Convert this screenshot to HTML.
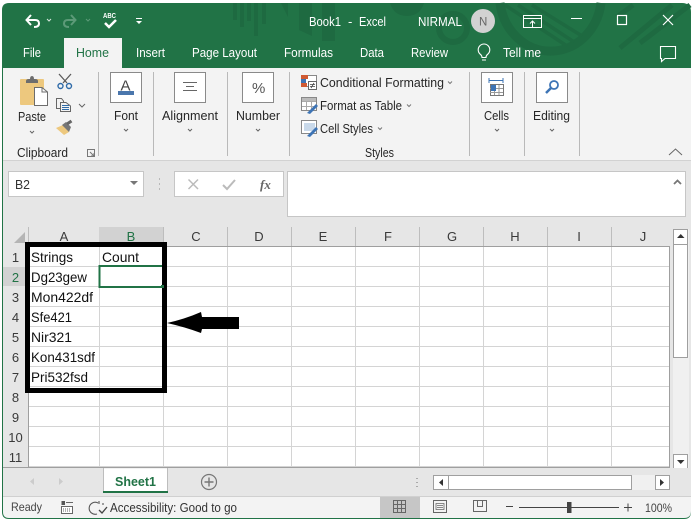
<!DOCTYPE html>
<html><head><meta charset="utf-8"><style>
html,body{margin:0;padding:0;background:#fff;width:694px;height:522px;overflow:hidden}
svg{display:block;position:absolute;left:0;top:0}
text{font-family:"Liberation Sans",sans-serif;font-size:13px;fill:#262626}
.w text{fill:#fff}
.c text{font-size:14px;fill:#111}
.h text{font-size:13px;fill:#3a3a3a;text-anchor:middle}
</style></head><body>
<svg width="694" height="522" viewBox="0 0 694 522">
<rect width="694" height="522" fill="#fff"/>
<!-- window -->
<path d="M2 10Q2 3 9 3H682Q691 3 691 12V512Q691 519 684 519H9Q2 519 2 512Z" fill="#217346"/>
<!-- title pattern -->
<g fill="#1e6a41">
<rect x="233" y="3" width="4" height="17"/><rect x="240" y="3" width="4" height="24"/><rect x="247" y="3" width="4" height="18"/><rect x="254" y="3" width="4" height="33"/><rect x="262" y="3" width="4" height="21"/>
<path d="M281 3H288V17Z"/><path d="M299 3H312V36L299 30Z"/><rect x="322" y="3" width="13" height="38"/>
<path d="M390 3H424Q420 16 407 16Q394 16 390 3Z"/>
</g>
<g fill="none" stroke="#1e6a41">
<circle cx="453" cy="28" r="14" stroke-width="6"/>
<path d="M500 3A51 56 0 0 0 601 3" stroke-width="9"/>
<path d="M505 5L567 46M518 5L574 42M532 5L582 36" stroke-width="3.5"/>
<path d="M617 17L633 5M620 48L672 5M640 43L690 5" stroke-width="5"/>
</g>
<rect x="3" y="68" width="688" height="92" fill="#f3f3f3"/>
<rect x="3" y="160" width="688" height="1" fill="#d2d2d2"/>
<rect x="3" y="161" width="688" height="336" fill="#e6e6e6"/>
<path d="M3 497H691V511Q691 518 684 518H9Q3 518 3 512Z" fill="#f3f3f3"/>
<rect x="3" y="496" width="688" height="1" fill="#d0d0d0"/>
<!-- QAT -->
<g fill="none" stroke="#fff" stroke-width="2">
<path d="M27 20H35Q39 20 39 23.500Q39 27 34 27"/><path d="M31 15L26.500 20L31 25" />
</g>
<path d="M47 19L49 21L51 19" fill="none" stroke="#d8e6dd"/>
<g fill="none" stroke="#5c9a78" stroke-width="2"><path d="M75 20H68Q64 20 64 23.500Q64 27 69 27"/><path d="M71 15L75.500 20L71 25"/></g>
<path d="M86 19L88 21L90 19" fill="none" stroke="#5c9a78"/>
<text x="103" y="18" textLength="13" lengthAdjust="spacingAndGlyphs" style="font-size:7px;font-weight:bold;fill:#fff">ABC</text>
<path d="M105 23L109 27L116 20" fill="none" stroke="#fff" stroke-width="2.500"/>
<path d="M136 18.500H142" stroke="#fff"/><path d="M136 21H142L139 24Z" fill="#fff"/>
<g class="w">
<text x="309" y="26" textLength="32" lengthAdjust="spacingAndGlyphs">Book1</text>
<text x="348" y="26">-</text>
<text x="359" y="26" textLength="27" lengthAdjust="spacingAndGlyphs">Excel</text>
<text x="418" y="26" textLength="44" lengthAdjust="spacingAndGlyphs">NIRMAL</text>
</g>
<circle cx="483" cy="21" r="12" fill="#d2d2d2"/>
<text x="479" y="25.500" style="font-size:11.5px;fill:#666">N</text>
<!-- window controls -->
<g fill="none" stroke="#fff">
<path d="M523.500 15.500H541.500V27.500H523.500ZM523.500 18.500H541.500"/>
<path d="M532.500 27V21.500M530 23.500L532.500 21L535 23.500"/>
<path d="M571 18.500H582"/>
<rect x="617.500" y="15.500" width="9" height="9" stroke-width="1.200"/>
<path d="M663 15L673 25M673 15L663 25" stroke-width="1.200"/>
<path d="M660.500 46.500H675.500V58.500H665L661.500 61.500V58.500H660.500Z" stroke-width="1.100"/>
<path d="M482 57.500Q482 55.500 480 54A5.800 5.800 0 1 1 488 54Q486 55.500 486 57.500ZM482 60H486" stroke-width="1.100"/>
</g>
<!-- tabs -->
<rect x="64" y="38" width="58" height="30" fill="#f3f3f3"/>
<g class="w">
<text x="23" y="57" textLength="18" lengthAdjust="spacingAndGlyphs">File</text>
<text x="136" y="57" textLength="29" lengthAdjust="spacingAndGlyphs">Insert</text>
<text x="192" y="57" textLength="65" lengthAdjust="spacingAndGlyphs">Page Layout</text>
<text x="284" y="57" textLength="49" lengthAdjust="spacingAndGlyphs">Formulas</text>
<text x="360" y="57" textLength="24" lengthAdjust="spacingAndGlyphs">Data</text>
<text x="411" y="57" textLength="37" lengthAdjust="spacingAndGlyphs">Review</text>
<text x="503" y="57" textLength="38" lengthAdjust="spacingAndGlyphs">Tell me</text>
</g>
<text x="76" y="57" textLength="33" lengthAdjust="spacingAndGlyphs" style="fill:#217346">Home</text>
<!-- separators -->
<g fill="#b9b9b9"><rect x="98" y="72" width="1" height="84"/><rect x="153" y="72" width="1" height="84"/><rect x="227" y="72" width="1" height="84"/><rect x="289" y="72" width="1" height="84"/><rect x="469" y="72" width="1" height="84"/><rect x="524" y="72" width="1" height="84"/><rect x="579" y="72" width="1" height="84"/></g>
<!-- clipboard -->
<rect x="20" y="79" width="24" height="26" rx="1" fill="#edc87e"/>
<path d="M26 81Q26 79 29 79H30Q30 76 32 76Q34 76 34 79H35Q38 79 38 81V83H26Z" fill="#6d6d6d"/>
<path d="M34.500 87.500H42L47.500 92V105.500H34.500Z" fill="#fff" stroke="#6d6d6d"/>
<path d="M42 87.500V92H47.500" fill="none" stroke="#6d6d6d"/>
<g fill="none" stroke="#5a5a5a" stroke-width="1.300"><path d="M59 74L67 83M71 74L63 83"/></g>
<g fill="none" stroke="#2f6ba8" stroke-width="1.400"><circle cx="60.500" cy="86" r="2.500"/><circle cx="69" cy="86" r="2.500"/></g>
<g fill="#f3f3f3" stroke="#666"><path d="M56.500 98.500H61.500L63.500 101V108.500H56.500Z"/><path d="M60.500 102.500H66L70.500 106V111.500H60.500Z"/></g>
<path d="M62 105.500H69M62 107.500H69M62 109.500H69" stroke="#2f6ba8"/>
<path d="M79 104L82 107L85 104" fill="none" stroke="#666"/>
<path d="M56 128L63 125L69 132L64 135Z" fill="#edc87e"/>
<path d="M62 125L66 122L71 127L69 132Z" fill="#777"/><path d="M67 124L71.500 121" stroke="#666" stroke-width="3"/>
<text x="18" y="121" textLength="28" lengthAdjust="spacingAndGlyphs">Paste</text>
<path d="M30 131L32 133L34 131" fill="none" stroke="#666"/>
<text x="17" y="157" textLength="51" lengthAdjust="spacingAndGlyphs">Clipboard</text>
<path d="M87.500 149.500H94.500V156.500H87.500ZM90 152L94 156M94 153V156H91" fill="none" stroke="#777"/>
<!-- big buttons -->
<g fill="#fff" stroke="#8a8a8a"><rect x="110.500" y="72.500" width="31" height="30"/><rect x="174.500" y="72.500" width="31" height="30"/><rect x="242.500" y="72.500" width="31" height="30"/><rect x="481.500" y="72.500" width="31" height="30"/><rect x="536.500" y="72.500" width="31" height="30"/></g>
<text x="120.500" y="90.500" style="font-size:15px;fill:#444">A</text>
<rect x="118" y="91" width="16" height="4" fill="#4a76ac"/>
<path d="M183 82.500H197M186 86.500H194M183 90.500H197" stroke="#666"/>
<text x="252" y="93" style="font-size:15px;fill:#555">%</text>
<path d="M489 80.500H503M489 78V83M503 78V83" stroke="#3d74b5"/>
<rect x="490.500" y="84.500" width="13" height="11" fill="#fff" stroke="#777"/>
<path d="M490 88.500H503M490 92.500H503M494.500 85V95M499 85V95" stroke="#999"/>
<rect x="491" y="85" width="5" height="6" fill="#3d74b5"/>
<circle cx="554" cy="85" r="4" fill="none" stroke="#3d74b5" stroke-width="1.800"/><path d="M551 88L546 93" stroke="#3d74b5" stroke-width="2.500"/>
<text x="114" y="120" textLength="24" lengthAdjust="spacingAndGlyphs">Font</text>
<text x="162" y="120" textLength="56" lengthAdjust="spacingAndGlyphs">Alignment</text>
<text x="236" y="120" textLength="44" lengthAdjust="spacingAndGlyphs">Number</text>
<text x="484" y="120" textLength="25" lengthAdjust="spacingAndGlyphs">Cells</text>
<text x="533" y="120" textLength="37" lengthAdjust="spacingAndGlyphs">Editing</text>
<g fill="none" stroke="#666"><path d="M124 129L126 131L128 129M188 129L190 131L192 129M256 129L258 131L260 129M495 129L497 131L499 129M550 129L552 131L554 129"/></g>
<!-- styles -->
<rect x="301.500" y="75.500" width="15" height="11" fill="#fff" stroke="#888"/>
<rect x="301" y="75" width="7" height="4" fill="#d05a33"/><rect x="301" y="79" width="5" height="4" fill="#3d74b5"/><rect x="301" y="83" width="6" height="4" fill="#d05a33"/>
<rect x="308.500" y="81.500" width="8" height="8" fill="#fff" stroke="#666"/><path d="M310 84.500H315M310 86.500H315M314 83L311 88" stroke="#444" stroke-width=".8"/>
<g><rect x="301.500" y="97.500" width="15" height="13" fill="#fff" stroke="#888"/><path d="M302 101.500H316M302 106.500H316M306.500 98V110M311.500 98V110" stroke="#aaa"/><rect x="302" y="98" width="14" height="3" fill="#bbb"/><path d="M307 113L316 104L318 106L310 114Z" fill="#3d74b5"/></g>
<g><rect x="301.500" y="120.500" width="15" height="13" fill="#fff" stroke="#888"/><rect x="304" y="123" width="11" height="8" fill="#c9d9ea"/><path d="M307 136L316 127L318 129L310 137Z" fill="#3d74b5"/></g>
<text x="320" y="87" textLength="124" lengthAdjust="spacingAndGlyphs">Conditional Formatting</text>
<text x="320" y="110" textLength="82" lengthAdjust="spacingAndGlyphs">Format as Table</text>
<text x="320" y="133" textLength="53" lengthAdjust="spacingAndGlyphs">Cell Styles</text>
<text x="365" y="157" textLength="29" lengthAdjust="spacingAndGlyphs">Styles</text>
<g fill="none" stroke="#777"><path d="M448 81.500L450 83.500L452 81.500M407 104.500L409 106.500L411 104.500M378 127.500L380 129.500L382 127.500"/></g>
<path d="M669 155L675.500 149L682 155" fill="none" stroke="#666"/>
<!-- formula bar -->
<rect x="8.500" y="171.500" width="135" height="25" fill="#fff" stroke="#c6c6c6"/>
<text x="15" y="189" textLength="15" lengthAdjust="spacingAndGlyphs" style="font-size:13px;fill:#333">B2</text>
<path d="M130 181H138L134 185Z" fill="#777"/>
<path d="M159 179H160M159 184H160M159 189H160" stroke="#aaa" stroke-width="1.500"/>
<rect x="174.500" y="171.500" width="109" height="25" fill="#fff" stroke="#c6c6c6"/>
<path d="M188.500 179.500L198 189M198 179.500L188.500 189" stroke="#bbb" stroke-width="1.500" fill="none"/>
<path d="M223 185L227 189L235 180" stroke="#bbb" stroke-width="2" fill="none"/>
<text x="260" y="189" style="font-family:'Liberation Serif',serif;font-style:italic;font-weight:bold;font-size:13px;fill:#666">fx</text>
<rect x="287.500" y="171.500" width="398" height="45" fill="#fff" stroke="#c6c6c6"/>
<path d="M674 184L677.500 180.500L681 184" fill="none" stroke="#777" stroke-width="1.800"/>
<!-- grid -->
<rect x="29" y="247" width="641" height="221" fill="#fff"/>
<g fill="#d4d4d4">
<rect x="99" y="247" width="1" height="221"/><rect x="163" y="247" width="1" height="221"/><rect x="227" y="247" width="1" height="221"/><rect x="291" y="247" width="1" height="221"/><rect x="355" y="247" width="1" height="221"/><rect x="419" y="247" width="1" height="221"/><rect x="483" y="247" width="1" height="221"/><rect x="547" y="247" width="1" height="221"/><rect x="611" y="247" width="1" height="221"/>
<rect x="29" y="266" width="641" height="1"/><rect x="29" y="286" width="641" height="1"/><rect x="29" y="306" width="641" height="1"/><rect x="29" y="326" width="641" height="1"/><rect x="29" y="346" width="641" height="1"/><rect x="29" y="366" width="641" height="1"/><rect x="29" y="386" width="641" height="1"/><rect x="29" y="406" width="641" height="1"/><rect x="29" y="426" width="641" height="1"/><rect x="29" y="446" width="641" height="1"/><rect x="29" y="466" width="641" height="1"/>
</g>
<!-- headers -->
<rect x="99" y="227" width="64" height="19" fill="#d2d2d2"/>
<rect x="3" y="267" width="25" height="19" fill="#d2d2d2"/>
<path d="M25 232V243H14Z" fill="#b5b5b5"/>
<g fill="#bdbdbd"><rect x="28" y="227" width="1" height="19"/><rect x="163" y="227" width="1" height="19"/><rect x="227" y="227" width="1" height="19"/><rect x="291" y="227" width="1" height="19"/><rect x="355" y="227" width="1" height="19"/><rect x="419" y="227" width="1" height="19"/><rect x="483" y="227" width="1" height="19"/><rect x="547" y="227" width="1" height="19"/><rect x="611" y="227" width="1" height="19"/></g>
<rect x="28" y="246" width="642" height="1" fill="#9f9f9f"/>
<rect x="28" y="246" width="1" height="222" fill="#9f9f9f"/>
<rect x="669" y="246" width="1" height="223" fill="#9f9f9f"/>
<rect x="3" y="467" width="667" height="1" fill="#9f9f9f"/>
<g class="h">
<text x="64" y="241">A</text><text x="131" y="241" style="fill:#217346">B</text><text x="196" y="241">C</text><text x="259" y="241">D</text><text x="323" y="241">E</text><text x="388" y="241">F</text><text x="452" y="241">G</text><text x="515" y="241">H</text><text x="579" y="241">I</text><text x="643" y="241">J</text>
<text x="15.500" y="262">1</text><text x="15.500" y="282" style="fill:#217346">2</text><text x="15.500" y="302">3</text><text x="15.500" y="322">4</text><text x="15.500" y="342">5</text><text x="15.500" y="362">6</text><text x="15.500" y="382">7</text><text x="15.500" y="402">8</text><text x="15.500" y="422">9</text><text x="15.500" y="442">10</text><text x="15.500" y="462">11</text>
</g>
<g class="c">
<text x="31" y="262" textLength="42" lengthAdjust="spacingAndGlyphs">Strings</text>
<text x="102" y="262" textLength="37" lengthAdjust="spacingAndGlyphs">Count</text>
<text x="31" y="282" textLength="56" lengthAdjust="spacingAndGlyphs">Dg23gew</text>
<text x="31" y="302" textLength="62" lengthAdjust="spacingAndGlyphs">Mon422df</text>
<text x="31" y="322" textLength="41" lengthAdjust="spacingAndGlyphs">Sfe421</text>
<text x="31" y="342" textLength="41" lengthAdjust="spacingAndGlyphs">Nir321</text>
<text x="31" y="362" textLength="64" lengthAdjust="spacingAndGlyphs">Kon431sdf</text>
<text x="31" y="382" textLength="57" lengthAdjust="spacingAndGlyphs">Pri532fsd</text>
</g>
<!-- selection -->
<path d="M162 266H99.500V287H162" fill="none" stroke="#217346" stroke-width="2"/>
<!-- annotation -->
<rect x="27.500" y="244.500" width="137" height="146" fill="none" stroke="#000" stroke-width="5"/>
<rect x="161" y="285" width="3" height="3" fill="#217346"/>
<path d="M167 323Q185 319 201 312L202 317H239V329H202L201 333Q185 327 167 323Z" fill="#000"/>
<!-- vertical scrollbar -->
<rect x="673" y="229" width="16" height="240" fill="#f0f0f0"/>
<rect x="673.500" y="244.500" width="14" height="113" fill="#fff" stroke="#9f9f9f"/>
<rect x="673.500" y="229.500" width="14" height="15" fill="#fff" stroke="#9f9f9f"/>
<rect x="673.500" y="454.500" width="14" height="14" fill="#fff" stroke="#9f9f9f"/>
<path d="M677 238H684.500L680.750 234Z" fill="#333"/><path d="M677 460H684.500L680.750 464Z" fill="#333"/>
<!-- sheet tabs -->
<rect x="3" y="468" width="688" height="28" fill="#e6e6e6"/>
<path d="M103.500 468.500H167.500V491H103.500Z" fill="#fff"/>
<path d="M103.500 468V492M167.500 468V492" stroke="#bdbdbd"/>
<rect x="103" y="491" width="65" height="2" fill="#217346"/>
<text x="115" y="486" textLength="41" lengthAdjust="spacingAndGlyphs" style="font-weight:bold;font-size:13px;fill:#217346">Sheet1</text>
<path d="M34 478L30 481.500L34 485ZM59 478L63 481.500L59 485Z" fill="#ccc"/>
<circle cx="209" cy="482" r="7.500" fill="none" stroke="#777" stroke-width="1.200"/><path d="M204.500 482H213.500M209 477.500V486.500" stroke="#777" stroke-width="1.400"/>
<path d="M417 478V479M417 482V483M417 486V487" stroke="#aaa" stroke-width="2"/>
<rect x="433" y="475" width="237" height="15" fill="#f0f0f0"/>
<rect x="433.500" y="475.500" width="15" height="14" fill="#fff" stroke="#9f9f9f"/>
<rect x="448.500" y="475.500" width="183" height="14" fill="#fff" stroke="#9f9f9f"/>
<rect x="655.500" y="475.500" width="14" height="14" fill="#fff" stroke="#9f9f9f"/>
<path d="M443 479V486L439 482.500ZM660 479V486L664 482.500Z" fill="#333"/>
<!-- status bar -->
<text x="11" y="511" textLength="31" lengthAdjust="spacingAndGlyphs" style="font-size:12px;fill:#444">Ready</text>
<rect x="61.500" y="501" width="3.500" height="4" fill="#555"/><rect x="61.500" y="506.500" width="11" height="7" fill="#fff" stroke="#666"/><path d="M66 502.500H73" stroke="#666"/><path d="M63 509H71M63 511H71" stroke="#666" stroke-dasharray="1 1"/>
<path d="M98 503A6 6 0 1 0 97 514M99 504V501M103 503V505" fill="none" stroke="#555" stroke-width="1.100"/><path d="M99 510L102 513L107 507" fill="none" stroke="#444" stroke-width="1.300"/>
<text x="110" y="512" textLength="127" lengthAdjust="spacingAndGlyphs" style="font-size:12.5px;fill:#333">Accessibility: Good to go</text>
<rect x="380" y="497" width="40" height="21" fill="#c6c6c6"/>
<path d="M393.500 500.500H405.500V512.500H393.500ZM393.500 504.500H405.500M393.500 508.500H405.500M397.500 500.500V512.500M401.500 500.500V512.500" fill="none" stroke="#666"/>
<rect x="433.500" y="500.500" width="13" height="12" fill="none" stroke="#666"/><path d="M436 503.500H444V509.500H436ZM437 505.500H443M437 507.500H443" fill="none" stroke="#666" stroke-width=".8"/>
<path d="M473.500 500.500H486.500V511.500H473.500ZM477.500 500.500V506.500H482.500V500.500" fill="none" stroke="#666"/>
<rect x="506" y="506" width="7" height="1" fill="#444"/><rect x="519" y="507" width="100" height="1" fill="#444"/>
<rect x="567" y="502" width="4.500" height="11" fill="#444"/>
<path d="M624 507.500H632M628 503.500V511.500" stroke="#444"/>
<text x="645" y="512" textLength="27" lengthAdjust="spacingAndGlyphs" style="font-size:12px;fill:#444">100%</text>
</svg>
</body></html>
